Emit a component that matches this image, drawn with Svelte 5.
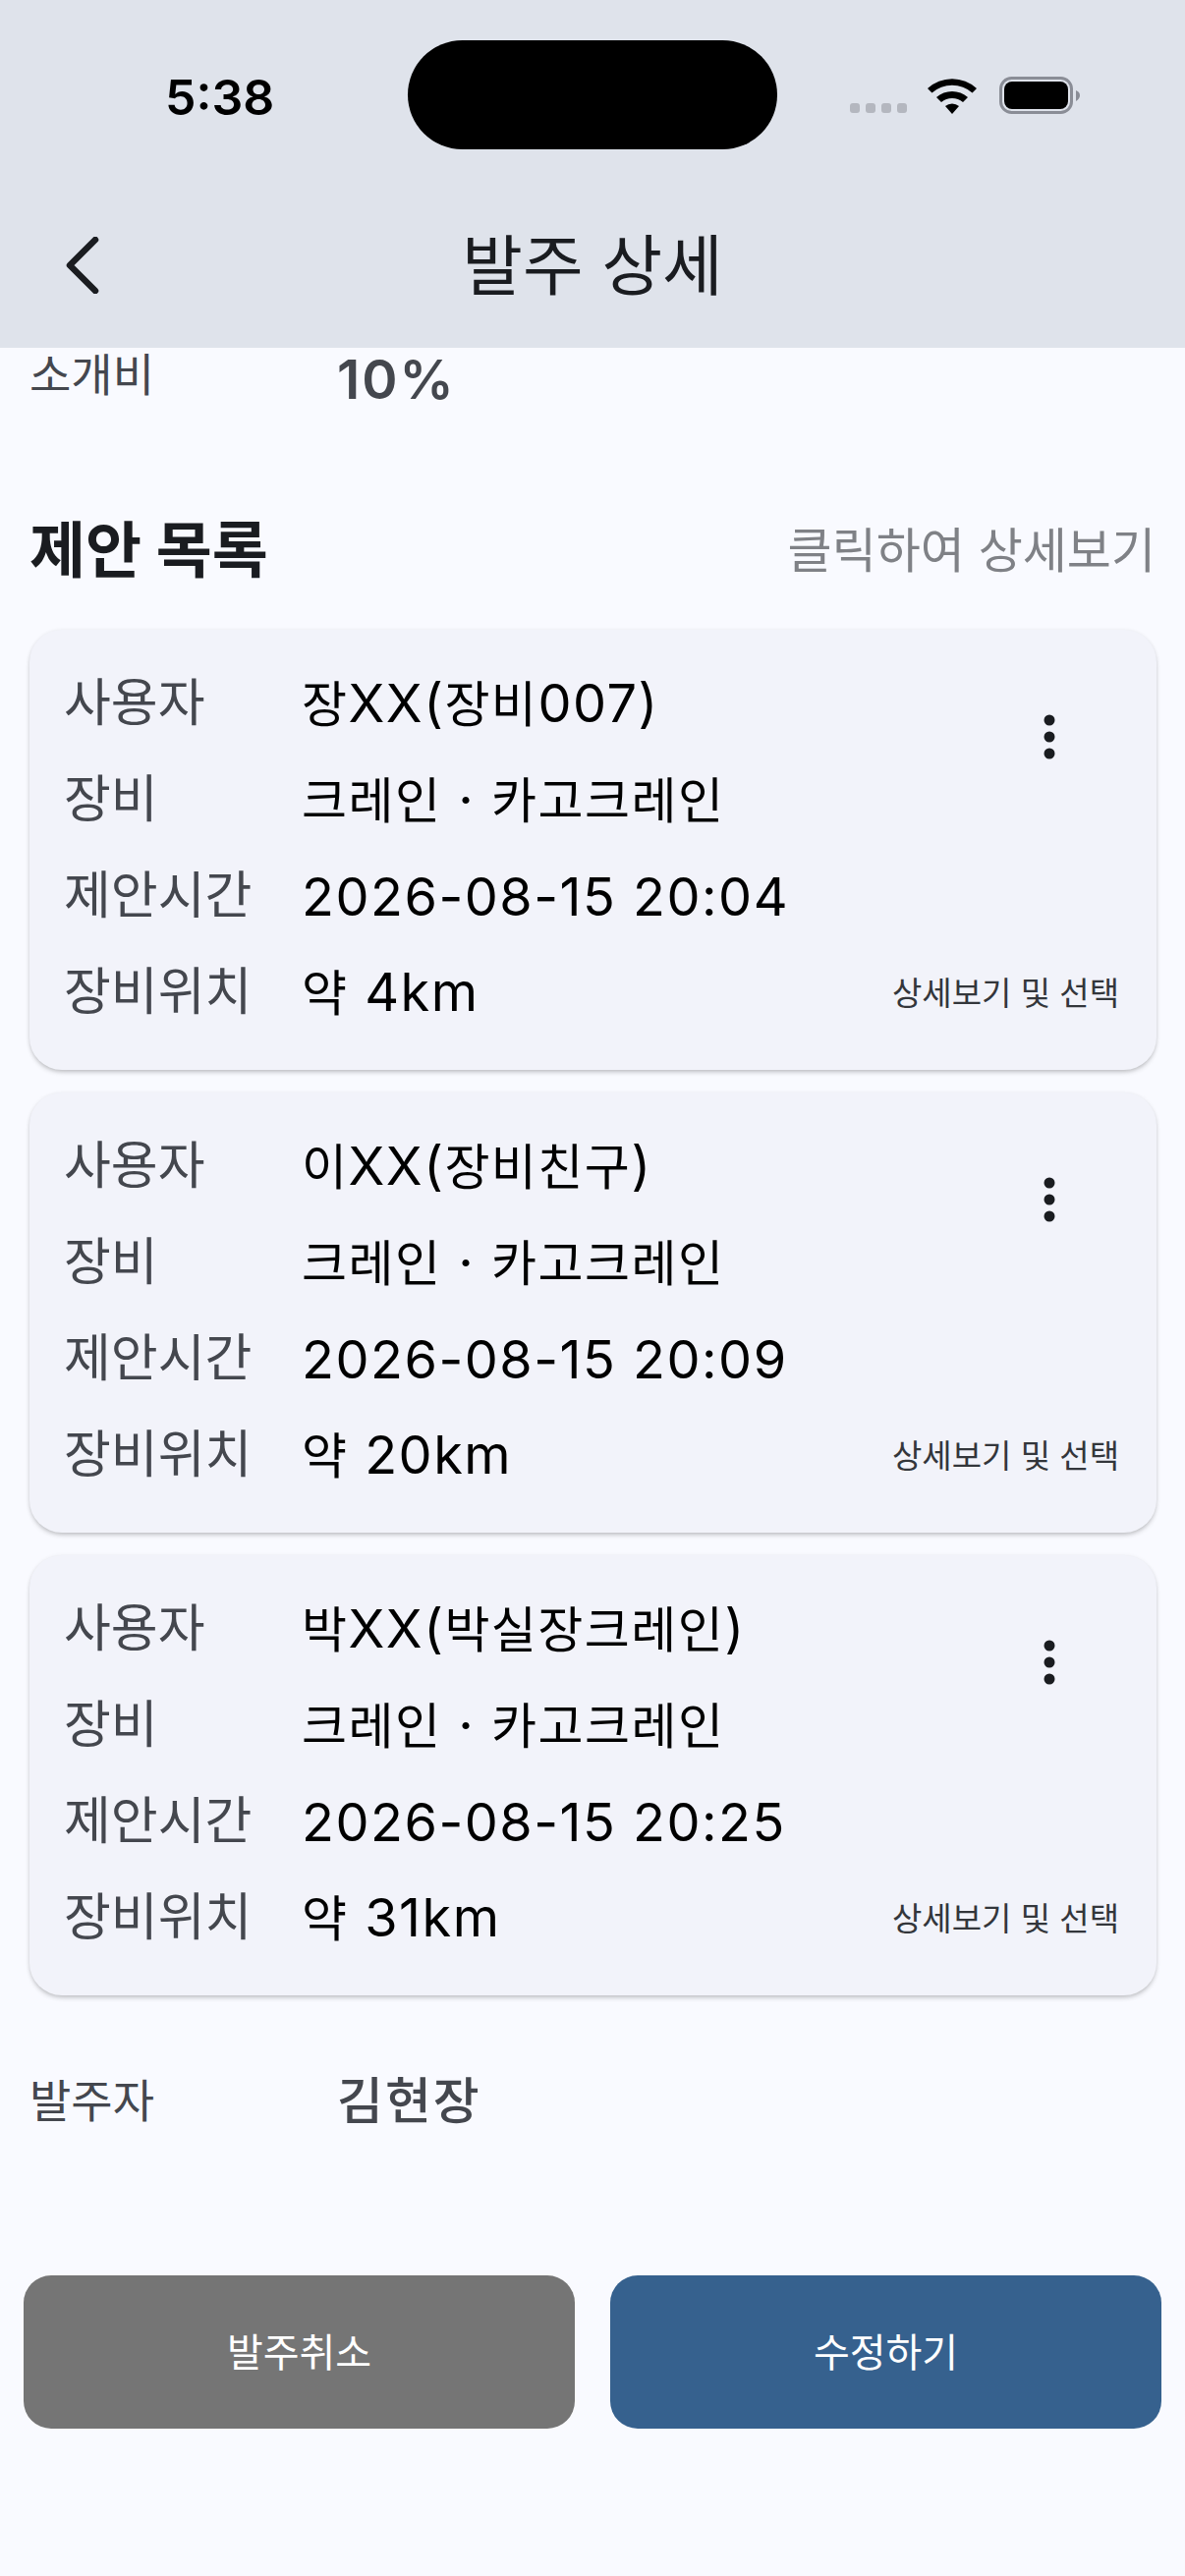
<script>
  const offers = [
    { user: '장XX(장비007)', time: '2026-08-15 20:04', dist: '약 4km' },
    { user: '이XX(장비친구)', time: '2026-08-15 20:09', dist: '약 20km' },
    { user: '박XX(박실장크레인)', time: '2026-08-15 20:25', dist: '약 31km' }
  ];

  // hangul runs get a smaller size than the latin around them
  const runs = (text) => text.split(/([가-힣]+)/).filter(Boolean);
</script>

{#snippet mixed(text)}
  {#each runs(text) as run}<span class:ko={/[가-힣]/.test(run)}>{run}</span>{/each}
{/snippet}

<div class="page">
  <header class="appbar">
    <div class="status">
      <span class="clock">5:38</span>
      <div class="island"></div>
      <div class="status-icons">
        <div class="signal"><i></i><i></i><i></i><i></i></div>
        <svg class="wifi" width="50" height="37" viewBox="0 0 50 37">
          <path d="M0 11 A37 37 0 0 1 50 11 L45.500 15.500 A31 31 0 0 0 4.500 15.500 Z" fill="#000" />
          <path d="M9 20 A24 24 0 0 1 41 20 L36 25 A17 17 0 0 0 14 25 Z" fill="#000" />
          <path d="M18 29 A11 11 0 0 1 32 29 L25 37 Z" fill="#000" />
        </svg>
        <svg class="battery" width="82" height="38" viewBox="0 0 82 38">
          <rect x="1.500" y="1.500" width="72" height="35" rx="11" fill="none" stroke="#8a8d96" stroke-width="3" />
          <rect x="5" y="5" width="65" height="28" rx="8" fill="#000" />
          <path d="M78 14 Q82 15.500 82 19 Q82 22.500 78 25 Z" fill="#8a8d96" />
        </svg>
      </div>
    </div>
    <div class="titlebar">
      <svg class="back" width="36" height="58" viewBox="0 0 36 58">
        <path d="M32 3 L6 29 L32 55" fill="none" stroke="#1a1c20" stroke-width="6.500" stroke-linecap="round" stroke-linejoin="round" />
      </svg>
      <h1>발주 상세</h1>
    </div>
  </header>

  <main class="content">
    <div class="info first">
      <span class="info-label">소개비</span>
      <span class="info-value">10%</span>
    </div>

    <div class="section-head">
      <h2>제안 목록</h2>
      <span class="hint">클릭하여 상세보기</span>
    </div>

    <div class="cards">
      {#each offers as offer}
        <article class="card">
          <svg class="more" width="12" height="46" viewBox="0 0 12 46">
            <circle cx="6" cy="6" r="5.500" />
            <circle cx="6" cy="23" r="5.500" />
            <circle cx="6" cy="40" r="5.500" />
          </svg>
          <div class="row"><span class="label">사용자</span><span class="value">{@render mixed(offer.user)}</span></div>
          <div class="row"><span class="label">장비</span><span class="value">{@render mixed('크레인 · 카고크레인')}</span></div>
          <div class="row"><span class="label">제안시간</span><span class="value time">{offer.time}</span></div>
          <div class="row">
            <span class="label">장비위치</span>
            <span class="value">{@render mixed(offer.dist)}</span>
            <span class="select">상세보기 및 선택</span>
          </div>
        </article>
      {/each}
    </div>

    <div class="info orderer">
      <span class="info-label">발주자</span>
      <span class="info-value">{@render mixed('김현장')}</span>
    </div>

    <div class="actions">
      <button class="cancel">발주취소</button>
      <button class="edit">수정하기</button>
    </div>
  </main>
</div>

<style>
  :global(body) {
    background: #f9faff;
  }

  .page {
    width: 1206px;
    height: 2622px;
    overflow: hidden;
    background: #f9faff;
    font-family: Inter, "Noto Sans CJK KR", sans-serif;
    color: #1a1c20;
  }

  .appbar {
    height: 354px;
    background: #dfe3eb;
    display: flex;
    flex-direction: column;
  }

  .status {
    display: flex;
    align-items: flex-start;
    height: 190px;
    padding-top: 41px;
    box-sizing: border-box;
  }

  .clock {
    width: 110px;
    margin: 36px 137px 0 168px;
    font-size: 50px;
    line-height: 44px;
    font-weight: 600;
    color: #000;
  }

  .island {
    width: 376px;
    height: 111px;
    border-radius: 56px;
    background: #000;
  }

  .status-icons {
    display: flex;
    align-items: flex-end;
    margin: 37px 0 0 74px;
  }

  .signal {
    display: flex;
    gap: 6px;
    margin-bottom: 1px;
    margin-right: 21px;
  }

  .signal i {
    width: 10px;
    height: 10px;
    border-radius: 3px;
    background: #b4b7bf;
  }

  .wifi {
    margin-right: 23px;
  }

  .titlebar {
    position: relative;
    display: flex;
    align-items: center;
    justify-content: center;
    height: 120px;
    margin-top: 21px;
  }

  .back {
    position: absolute;
    left: 65px;
    top: 30px;
  }

  h1 {
    margin: 0;
    font-size: 67px;
    font-weight: 400;
    line-height: 80px;
    color: #1a1c20;
  }

  .content {
    display: flex;
    flex-direction: column;
  }

  .info {
    display: flex;
    align-items: center;
    padding-left: 30px;
  }

  .info.first {
    height: 64px;
  }

  .info-label {
    width: 313px;
    font-size: 46px;
    color: #44474e;
  }

  .first .info-label {
    margin-bottom: 16px;
  }

  .info-value {
    font-size: 55px;
    font-weight: 600;
    letter-spacing: 2px;
    color: #44474e;
  }

  .info-value .ko {
    font-size: 51px;
    font-weight: 500;
  }

  .section-head {
    display: flex;
    justify-content: space-between;
    align-items: center;
    height: 80px;
    margin-top: 98px;
    padding: 0 30px;
  }

  h2 {
    margin: 0;
    font-size: 62px;
    font-weight: 700;
  }

  .hint {
    font-size: 49px;
    color: #7f8186;
  }

  .cards {
    display: flex;
    flex-direction: column;
    gap: 23px;
    margin: 45px 29px 0 30px;
  }

  .card {
    position: relative;
    height: 448px;
    padding: 23px 38px 0 35px;
    box-sizing: border-box;
    border-radius: 33px;
    background: #f2f3fa;
    box-shadow: 0 3px 5px -1px rgba(0, 0, 0, 0.24), 0 0 4px rgba(0, 0, 0, 0.05);
  }

  .more {
    position: absolute;
    right: 103px;
    top: 86px;
    fill: #1a1c20;
  }

  .row {
    display: flex;
    align-items: center;
    height: 98px;
  }

  .label {
    width: 242px;
    flex: none;
    font-size: 52px;
    margin-bottom: 3px;
    color: #44474e;
  }

  .value {
    flex: 1;
    font-size: 54px;
    letter-spacing: 1.500px;
    color: #000;
  }

  .value.time {
    padding-top: 6px;
  }

  .ko {
    font-size: 50px;
  }

  .select {
    margin-top: 3px;
    font-size: 33px;
    color: #33363b;
  }

  .info.orderer {
    height: 80px;
    margin-top: 64px;
  }

  .actions {
    display: flex;
    gap: 36px;
    margin: 141px 24px 0;
  }

  .actions button {
    flex: 1;
    height: 156px;
    padding-bottom: 6px;
    border: none;
    border-radius: 28px;
    font-family: inherit;
    font-size: 40px;
    color: #fff;
  }

  .cancel {
    background: #757575;
  }

  .edit {
    background: #36618e;
  }
</style>
